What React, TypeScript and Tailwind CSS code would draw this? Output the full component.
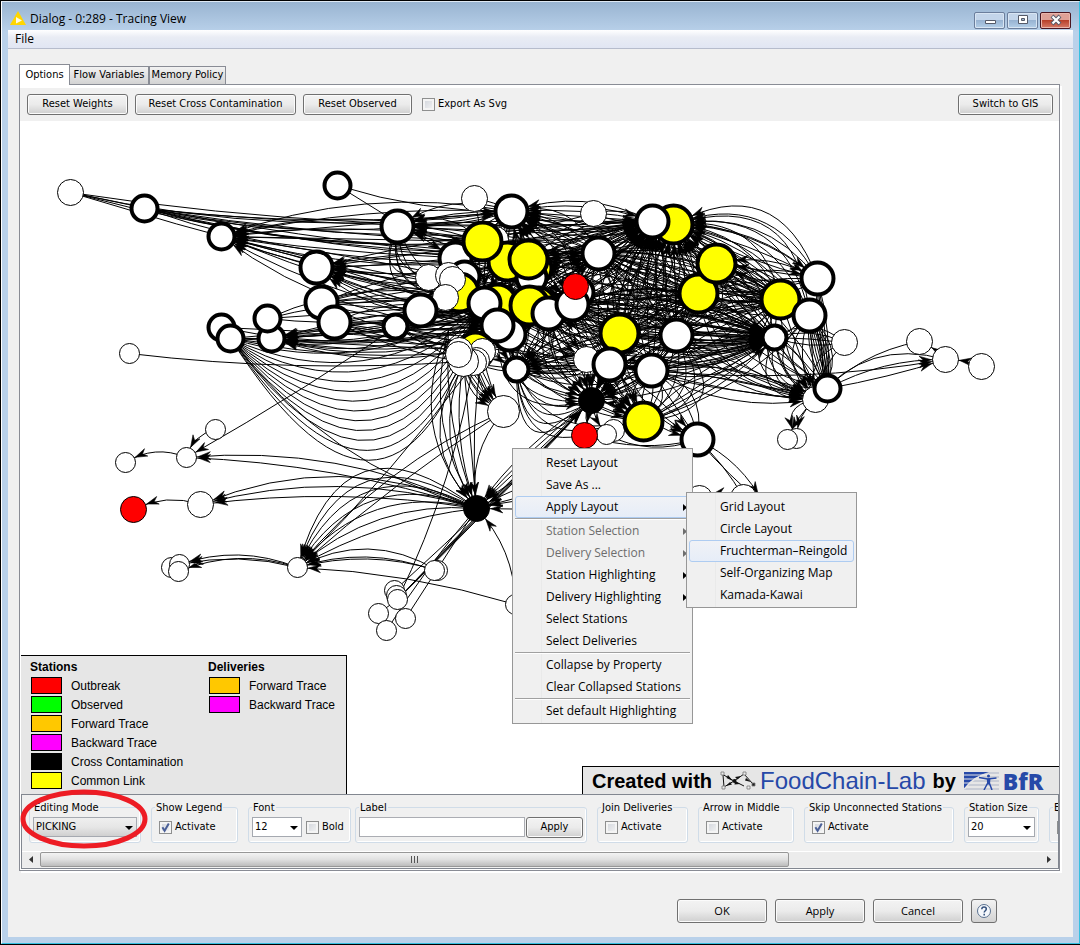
import { useId, type ReactNode } from "react";

/* ---------- graph data ---------- */

type Node = [x: number, y: number, r: number, kind: string];

// kinds: t = thin white, w = thick white, y = thick yellow, r = red, k = black
const nodes: Node[] = [
  [70, 192, 13, "t"], [144, 208, 13, "w"], [221, 236, 13, "w"], [337, 185, 13, "w"],
  [321, 302, 16, "w"], [316, 267, 16, "w"], [334, 322, 16, "w"], [271, 338, 13, "w"],
  [267, 318, 13, "w"], [221, 327, 13, "w"], [230, 338, 13, "w"], [129, 353, 10, "t"],
  [397, 226, 16, "w"], [474, 198, 13, "t"], [495, 239, 13, "t"], [511, 211, 16, "w"],
  [593, 213, 13, "t"], [455, 258, 16, "w"], [428, 277, 13, "t"], [464, 276, 15, "w"],
  [535, 268, 16, "y"], [507, 261, 19, "y"], [482, 241, 19, "y"], [531, 277, 15, "w"],
  [528, 259, 19, "y"], [459, 292, 19, "y"], [448, 275, 13, "t"], [452, 279, 13, "t"],
  [445, 297, 13, "t"], [497, 303, 19, "y"], [484, 303, 16, "w"], [538, 304, 17, "y"],
  [529, 305, 19, "y"], [548, 313, 16, "w"], [578, 292, 15, "w"], [572, 304, 16, "w"],
  [575, 286, 13, "r"], [598, 253, 16, "w"], [420, 310, 16, "w"], [395, 326, 12, "w"],
  [509, 334, 16, "w"], [497, 325, 16, "w"], [475, 350, 18, "y"], [482, 351, 13, "t"],
  [476, 360, 13, "t"], [473, 362, 13, "t"], [463, 361, 15, "t"], [459, 350, 13, "t"],
  [458, 354, 13, "t"], [516, 369, 12, "w"], [503, 411, 16, "t"], [619, 333, 19, "y"],
  [586, 359, 13, "t"], [609, 364, 16, "w"], [591, 400, 13, "k"], [676, 335, 16, "w"],
  [651, 370, 16, "w"], [613, 430, 11, "t"], [606, 434, 10, "t"], [584, 435, 13, "r"],
  [643, 421, 19, "y"], [697, 439, 16, "w"], [673, 224, 19, "y"], [652, 221, 16, "w"],
  [698, 293, 19, "y"], [716, 263, 19, "y"], [817, 278, 16, "w"], [780, 299, 19, "y"],
  [809, 315, 16, "w"], [774, 337, 12, "w"], [844, 342, 13, "t"], [815, 399, 13, "t"],
  [827, 388, 13, "w"], [796, 438, 10, "t"], [787, 439, 10, "t"], [919, 341, 13, "t"],
  [945, 359, 13, "t"], [981, 366, 13, "t"], [215, 429, 10, "t"], [186, 457, 10, "t"],
  [125, 462, 10, "t"], [200, 504, 13, "t"], [133, 509, 13, "r"], [476, 508, 13, "k"],
  [171, 567, 10, "t"], [179, 564, 10, "t"], [178, 571, 10, "t"], [297, 567, 10, "t"],
  [437, 570, 10, "t"], [434, 570, 10, "t"], [394, 590, 10, "t"], [396, 595, 10, "t"],
  [397, 599, 10, "t"], [378, 613, 10, "t"], [405, 618, 10, "t"], [386, 630, 10, "t"],
  [515, 604, 10, "t"], [699, 498, 13, "t"], [743, 497, 13, "t"], [764, 505, 12, "t"],
];

const radiusAt = (x: number, y: number) =>
  nodes.find((n) => n[0] === x && n[1] === y)?.[2] ?? 12;

type Point = [number, number];
// from, to, first control offset, number of parallel deliveries, gap between them, no arrow heads
type Bundle = [from: Point, to: Point, offset: number, count: number, gap?: number, plain?: boolean];

const bundles: Bundle[] = [
  [[70, 192], [652, 221], 30, 1], [[70, 192], [511, 211], 40, 1], [[70, 192], [528, 259], 16, 1],
  [[70, 192], [598, 253], 40, 1], [[70, 192], [497, 303], 10, 1],
  [[144, 208], [511, 211], 20, 2], [[144, 208], [652, 221], 20, 3], [[144, 208], [482, 241], 10, 2],
  [[144, 208], [528, 259], 20, 2],
  [[337, 185], [511, 211], 14, 1], [[337, 185], [455, 258], 0, 1],
  [[511, 211], [221, 236], 0, 3], [[482, 241], [221, 236], 0, 3], [[528, 259], [221, 236], -50, 4],
  [[497, 325], [221, 236], -50, 4], [[572, 304], [221, 236], -30, 3],
  [[652, 221], [316, 267], -20, 3], [[528, 259], [316, 267], -40, 4], [[548, 313], [316, 267], -50, 4],
  [[484, 303], [316, 267], -50, 4],
  [[511, 211], [397, 226], -10, 3], [[673, 224], [397, 226], -50, 4], [[598, 253], [397, 226], -30, 4],
  [[482, 241], [397, 226], 30, 1],
  [[397, 226], [459, 292], 20, 3], [[397, 226], [428, 277], 30, 2, 20, true], [[397, 226], [445, 297], 44, 2, 20, true],
  [[321, 302], [497, 303], -30, 5], [[334, 322], [497, 325], -40, 5], [[334, 322], [609, 364], -20, 4],
  [[321, 302], [598, 253], -30, 4], [[267, 318], [484, 303], -40, 4],
  [[484, 303], [271, 338], -50, 4], [[497, 325], [271, 338], -40, 4], [[572, 304], [271, 338], -70, 5],
  [[230, 338], [484, 303], 20, 14, 20, true], [[230, 338], [475, 350], -20, 3], [[221, 327], [497, 325], 10, 2],
  [[230, 338], [476, 508], 50, 1, 20, true], [[129, 353], [463, 361], 16, 1, 20, true],
  [[511, 211], [474, 198], 4, 1, 20, true], [[474, 198], [482, 241], 0, 1, 20, true],
  [[420, 310], [652, 221], -20, 5], [[395, 326], [598, 253], 0, 4], [[395, 326], [509, 334], -30, 4],
  [[420, 310], [529, 305], -30, 4], [[395, 326], [609, 364], 10, 3, 20, true],

  [[484, 303], [652, 221], -40, 7], [[529, 305], [652, 221], -60, 8], [[572, 304], [652, 221], -50, 7],
  [[609, 364], [652, 221], -60, 7], [[619, 333], [673, 224], -60, 7], [[676, 335], [673, 224], -60, 6],
  [[528, 259], [652, 221], -30, 6], [[511, 211], [652, 221], -20, 4], [[598, 253], [652, 221], -20, 3],
  [[593, 213], [652, 221], -12, 2, 20, true], [[698, 293], [652, 221], -40, 5], [[716, 263], [673, 224], -10, 2],
  [[817, 278], [673, 224], 28, 4], [[809, 315], [673, 224], -40, 8], [[780, 299], [673, 224], -40, 6],
  [[774, 337], [673, 224], -50, 6, 20, true], [[482, 241], [593, 213], 0, 2, 20, true], [[652, 221], [511, 211], -30, 4],
  [[572, 304], [511, 211], -30, 5], [[598, 253], [511, 211], -40, 5], [[698, 293], [511, 211], -60, 6],
  [[780, 299], [528, 259], -70, 8], [[780, 299], [598, 253], -60, 7, 20, true], [[809, 315], [598, 253], -40, 6, 20, true],
  [[774, 337], [548, 313], -50, 7], [[817, 278], [698, 293], -30, 4, 20, true], [[817, 278], [716, 263], -20, 3],
  [[484, 303], [774, 337], -70, 9], [[529, 305], [774, 337], -50, 8], [[598, 253], [774, 337], -60, 8, 20, true],
  [[572, 304], [774, 337], -60, 8, 20, true], [[619, 333], [774, 337], -40, 6], [[676, 335], [774, 337], -30, 4],
  [[651, 370], [774, 337], -20, 4, 20, true], [[643, 421], [774, 337], -20, 3], [[652, 221], [809, 315], -40, 5, 20, true],
  [[716, 263], [809, 315], -30, 4, 20, true], [[698, 293], [780, 299], -30, 4, 20, true], [[673, 224], [817, 278], -30, 3],

  [[484, 303], [509, 334], -30, 4], [[528, 259], [484, 303], -40, 5], [[482, 241], [529, 305], -50, 6],
  [[455, 258], [548, 313], -40, 6], [[511, 211], [497, 325], -60, 7], [[598, 253], [497, 325], -60, 7],
  [[459, 292], [548, 313], -60, 7], [[464, 276], [572, 304], -40, 5], [[507, 261], [572, 304], -30, 4],
  [[511, 211], [459, 292], -20, 4], [[619, 333], [529, 305], -50, 6], [[676, 335], [572, 304], -50, 6, 20, true],
  [[698, 293], [572, 304], -60, 7, 20, true], [[698, 293], [516, 369], -60, 7], [[619, 333], [516, 369], -50, 6, 20, true],
  [[548, 313], [516, 369], -40, 5, 20, true], [[651, 370], [516, 369], -50, 5, 20, true], [[529, 305], [516, 369], -30, 4, 20, true],
  [[484, 303], [516, 369], -10, 3], [[598, 253], [619, 333], -50, 5, 20, true], [[529, 305], [586, 359], -10, 3],
  [[484, 303], [609, 364], -60, 7, 20, true], [[572, 304], [609, 364], -40, 5, 20, true], [[698, 293], [619, 333], -40, 5, 20, true],
  [[598, 253], [676, 335], -50, 5, 20, true], [[716, 263], [676, 335], -50, 5, 20, true], [[780, 299], [676, 335], -40, 5, 20, true],
  [[676, 335], [609, 364], -30, 4], [[780, 299], [651, 370], -30, 5, 20, true], [[652, 221], [651, 370], -70, 7, 20, true],

  [[548, 313], [591, 400], -30, 5], [[497, 325], [591, 400], -20, 6], [[609, 364], [591, 400], -20, 3],
  [[676, 335], [591, 400], -30, 4], [[651, 370], [591, 400], -30, 4], [[619, 333], [591, 400], -40, 5],
  [[516, 369], [591, 400], 40, 4, 20, true], [[698, 293], [591, 400], -40, 5, 20, true], [[774, 337], [591, 400], -30, 3, 20, true],
  [[548, 313], [643, 421], 0, 4], [[609, 364], [643, 421], -10, 3], [[572, 304], [643, 421], -10, 3],
  [[676, 335], [643, 421], -90, 5, 20, true], [[651, 370], [643, 421], -30, 4, 20, true], [[484, 303], [643, 421], 20, 3, 20, true],
  [[609, 364], [697, 439], -10, 2], [[651, 370], [697, 439], -40, 3, 20, true], [[619, 333], [697, 439], 40, 2],
  [[591, 400], [584, 435], 0, 1], [[591, 400], [606, 434], 6, 2],
  [[584, 435], [697, 439], 16, 1, 20, true], [[606, 434], [697, 439], 20, 1, 20, true],

  [[484, 303], [503, 411], 20, 3, 20, true], [[463, 361], [503, 411], 0, 4, 8], [[476, 360], [503, 411], 0, 3, 8],
  [[516, 369], [609, 425], 40, 3, 20, true],
  [[809, 315], [815, 399], -40, 6, 20, true], [[809, 315], [827, 388], -20, 8, 5, true], [[774, 337], [815, 399], -20, 5],
  [[780, 299], [815, 399], 0, 5], [[844, 342], [815, 399], 10, 2, 20, true], [[844, 342], [774, 337], -10, 4, 12, true],
  [[676, 335], [815, 399], 0, 4, 12], [[651, 370], [815, 399], -30, 4], [[609, 364], [815, 399], -30, 3],
  [[698, 293], [827, 388], 0, 5, 20, true], [[716, 263], [827, 388], -20, 4, 20, true], [[817, 278], [827, 388], -10, 5, 5, true],
  [[643, 421], [809, 315], 10, 2, 20, true],
  [[815, 399], [787, 439], 6, 1], [[815, 399], [796, 438], 10, 2],
  [[827, 388], [945, 359], -16, 2], [[919, 341], [815, 399], 20, 1, 20, true], [[945, 359], [815, 399], 44, 1, 20, true],
  [[651, 370], [945, 359], 20, 1], [[945, 359], [919, 341], 4, 1], [[981, 366], [945, 359], 4, 1],

  [[476, 508], [186, 457], 20, 2], [[476, 508], [200, 504], 20, 3], [[476, 508], [297, 567], 20, 7],
  [[503, 411], [297, 567], 10, 2], [[476, 360], [297, 567], -10, 1],
  [[420, 310], [186, 457], -6, 1], [[215, 429], [186, 457], 12, 1], [[186, 457], [125, 462], 16, 1],
  [[200, 504], [133, 509], 14, 1], [[297, 567], [179, 564], 14, 2, 8], [[297, 567], [178, 571], 22, 1],
  [[437, 570], [297, 567], 20, 2], [[434, 570], [297, 567], 24, 1], [[515, 604], [297, 567], 14, 1],
  [[448, 330], [476, 508], 20, 3], [[463, 361], [476, 508], 0, 4], [[482, 351], [476, 508], 10, 1],
  [[503, 411], [476, 508], 24, 1, 20, true],
  [[475, 350], [397, 599], -20, 1, 20, true],
  [[397, 599], [591, 400], -3, 4, 2], [[394, 590], [591, 400], 4, 1],
  [[405, 618], [476, 508], 0, 1, 20, true], [[386, 630], [476, 508], -6, 1, 20, true],
  [[591, 400], [476, 508], 0, 3, 8], [[620, 470], [476, 508], 0, 3], [[620, 510], [476, 508], 0, 2],
  [[515, 604], [476, 508], 20, 1], [[397, 599], [378, 613], 0, 1, 20, true],
  [[697, 439], [743, 497], -6, 1, 20, true], [[697, 439], [764, 505], -16, 2], [[743, 497], [699, 498], 10, 1],
];

const round = (n: number) => Math.round(n * 10) / 10;

function buildEdges() {
  let lines = "";
  let heads = "";
  for (const [[x1, y1], [x2, y2], first, count, gap = 20, plain = false] of bundles) {
    const dx = x2 - x1;
    const dy = y2 - y1;
    const len = Math.hypot(dx, dy);
    for (let i = 0; i < count; i++) {
      const off = first + i * gap;
      const cx = (x1 + x2) / 2 - (dy / len) * off;
      const cy = (y1 + y2) / 2 + (dx / len) * off;
      lines += `M${x1} ${y1}Q${round(cx)} ${round(cy)} ${x2} ${y2}`;
      if (plain) continue;
      const r = radiusAt(x2, y2) + 1;
      let t = 1;
      let px = x2;
      let py = y2;
      while (t > 0.3 && Math.hypot(px - x2, py - y2) < r) {
        t -= 0.005;
        const u = 1 - t;
        px = u * u * x1 + 2 * u * t * cx + t * t * x2;
        py = u * u * y1 + 2 * u * t * cy + t * t * y2;
      }
      const tx = (1 - t) * (cx - x1) + t * (x2 - cx);
      const ty = (1 - t) * (cy - y1) + t * (y2 - cy);
      const tl = Math.hypot(tx, ty);
      const ux = tx / tl;
      const uy = ty / tl;
      const at = (back: number, side: number) =>
        `${round(px - ux * back - uy * side)} ${round(py - uy * back + ux * side)}`;
      heads += `M${at(0, 0)}L${at(12, 4)}L${at(8, 0)}L${at(12, -4)}Z`;
    }
  }
  return { lines, heads };
}

const edges = buildEdges();

const fills: Record<string, string> = { t: "#fff", w: "#fff", y: "#ff0", r: "#f00", k: "#000" };

function Graph() {
  return (
    <svg width="1038" height="673" viewBox="20.5 120.5 1038 673" className="block" role="img" aria-label="Delivery graph">
      <path d={edges.lines} fill="none" stroke="#000" strokeWidth="1" />
      <path d={edges.heads} fill="#000" stroke="#000" strokeWidth="0.6" />
      {nodes.map(([x, y, r, kind], i) => (
        <circle key={i} cx={x} cy={y} r={r} fill={fills[kind]} stroke="#000" strokeWidth={kind === "w" || kind === "y" ? 4 : 1} />
      ))}
    </svg>
  );
}

/* ---------- controls ---------- */

function Button({ children, className = "" }: { children: ReactNode; className?: string }) {
  return (
    <button
      type="button"
      className={`flex shrink-0 items-center justify-center whitespace-nowrap rounded-[3px] border border-[#707070] bg-linear-to-b from-[#f3f3f3] from-0% via-[#ebebeb] via-50% to-[#cfcfcf] shadow-[inset_0_0_0_1px_#fbfbfb] ${className}`}
    >
      {children}
    </button>
  );
}

function Check({ label, checked = false }: { label: string; checked?: boolean }) {
  return (
    <label className="flex items-center gap-[3px] whitespace-nowrap">
      <span className="grid size-[13px] shrink-0">
        <input
          type="checkbox"
          defaultChecked={checked}
          className="peer col-start-1 row-start-1 size-[13px] appearance-none border border-[#8e8f8f] bg-linear-to-br from-[#cfd3da] to-[#f6f6f6] shadow-[inset_0_0_0_2px_#f4f4f4]"
        />
        <svg viewBox="0 0 13 13" className="pointer-events-none invisible col-start-1 row-start-1 size-[13px] peer-checked:visible">
          <path d="M3.4 6.2 5.6 9.8 9.8 2.6" fill="none" stroke="#4a5f97" strokeWidth="2" />
        </svg>
      </span>
      {label}
    </label>
  );
}

function Combo({ label, value, options, className }: { label: string; value: string; options: string[]; className: string }) {
  return (
    <span className={`grid h-5 ${className}`}>
      <select
        aria-label={label}
        defaultValue={value}
        className="col-start-1 row-start-1 h-5 w-full appearance-none border border-[#a5a9b0] bg-transparent pl-0.5 pr-4"
      >
        {options.map((o) => (
          <option key={o}>{o}</option>
        ))}
      </select>
      <svg viewBox="0 0 8 4" className="pointer-events-none col-start-1 row-start-1 mr-1 mt-0.5 h-1 w-2 self-center justify-self-end">
        <path d="M0 0h8L4 4z" />
      </svg>
    </span>
  );
}

function Group({ title, className, indent = false, children }: { title: string; className: string; indent?: boolean; children: ReactNode }) {
  return (
    <fieldset className={`h-[42px] min-w-0 shrink-0 rounded-[3px] border border-[#d0dce8] px-[3px] shadow-[inset_-1px_-1px_0_#fff] ${className}`}>
      <legend className="whitespace-nowrap px-px leading-[13px]">{title}</legend>
      <div className={`mt-[3px] flex h-5 items-center ${indent ? "pl-1" : ""}`}>{children}</div>
    </fieldset>
  );
}

function ControlBar() {
  const id = useId();
  return (
    <div className="relative">
      <div className="flex h-[52px] overflow-hidden pl-[7px] pt-1.5">
        <Group title="Editing Mode" className="mr-2.5 w-[112px]">
          <Combo label="Editing Mode" value="PICKING" options={["PICKING", "TRANSFORMING"]} className="w-[105px] bg-linear-to-b from-[#f0f0f0] via-[#e6e6e6] to-[#cdcdcd]" />
        </Group>
        <Group title="Show Legend" indent className="mr-2.5 w-[87px]">
          <Check label="Activate" checked />
        </Group>
        <Group title="Font" className="mr-1 w-[103px]">
          <Combo label="Font" value="12" options={["10", "12", "14", "18"]} className="mr-1 w-[50px] bg-white" />
          <Check label="Bold" />
        </Group>
        <Group title="Label" className="mr-2.5 w-[232px]">
          <input id={id} aria-label="Label" className="h-5 w-[166px] shrink-0 border border-[#abadb3] bg-white px-1" />
          <Button className="ml-px h-[21px] w-[57px]">Apply</Button>
        </Group>
        <Group title="Join Deliveries" indent className="mr-2.5 w-[91px]">
          <Check label="Activate" />
        </Group>
        <Group title="Arrow in Middle" indent className="mr-2.5 w-[96px]">
          <Check label="Activate" />
        </Group>
        <Group title="Skip Unconnected Stations" indent className="mr-2.5 w-[150px]">
          <Check label="Activate" checked />
        </Group>
        <Group title="Station Size" className="mr-2.5 w-[75px]">
          <Combo label="Station Size" value="20" options={["10", "20", "30"]} className="w-[68px] bg-white" />
        </Group>
        <Group title="Edge Label" indent className="w-[90px]">
          <Check label="" />
        </Group>
      </div>
      <svg viewBox="0 0 128 60" className="pointer-events-none absolute -left-0.5 -top-[6px] h-[60px] w-[128px]">
        <ellipse cx="64" cy="30" rx="61" ry="27" fill="none" stroke="#ed1c24" strokeWidth="5" />
      </svg>
    </div>
  );
}

function ScrollBar() {
  return (
    <div className="mb-px mt-1 flex h-4 items-center border-t border-white bg-[#ececec]">
      <button type="button" aria-label="Scroll left" className="flex h-4 w-[18px] items-center justify-center">
        <svg viewBox="0 0 4 7" className="h-[7px] w-1"><path d="M4 0v7L0 3.5z" fill="#333" /></svg>
      </button>
      <div className="flex h-[15px] w-[749px] items-center justify-center gap-0.5 rounded-[2px] border border-[#979797] bg-linear-to-b from-[#f3f3f3] via-[#e0e0e0] to-[#bcbcbc]">
        <span className="h-[7px] w-px bg-[#555]" />
        <span className="h-[7px] w-px bg-[#555]" />
        <span className="h-[7px] w-px bg-[#555]" />
      </div>
      <button type="button" aria-label="Scroll right" className="ml-auto flex h-4 w-[18px] items-center justify-center">
        <svg viewBox="0 0 4 7" className="h-[7px] w-1"><path d="M0 0v7l4-3.5z" fill="#333" /></svg>
      </button>
    </div>
  );
}

/* ---------- overlays on the graph ---------- */

function Swatch({ color, label }: { color: string; label: string }) {
  return (
    <li className="flex h-[19px] items-center gap-[9px]">
      <span className={`h-[17px] w-[31px] border border-black ${color}`} />
      {label}
    </li>
  );
}

function Legend() {
  return (
    <div className="absolute bottom-0 left-0 flex h-[139px] w-[326px] border-r border-t border-black bg-[#e6e6e6] pl-[9px] pt-[3px] font-['Liberation_Sans',Arial,sans-serif] text-[12px] leading-4">
      <div className="w-[178px]">
        <h2 className="pb-px font-bold">Stations</h2>
        <ul className="pl-px">
          <Swatch color="bg-[#ff0000]" label="Outbreak" />
          <Swatch color="bg-[#00ff00]" label="Observed" />
          <Swatch color="bg-[#ffc800]" label="Forward Trace" />
          <Swatch color="bg-[#ff00ff]" label="Backward Trace" />
          <Swatch color="bg-black" label="Cross Contamination" />
          <Swatch color="bg-[#ffff00]" label="Common Link" />
        </ul>
      </div>
      <div>
        <h2 className="pb-px font-bold">Deliveries</h2>
        <ul className="pl-px">
          <Swatch color="bg-[#ffc800]" label="Forward Trace" />
          <Swatch color="bg-[#ff00ff]" label="Backward Trace" />
        </ul>
      </div>
    </div>
  );
}

function Credit() {
  return (
    <div className="absolute bottom-0 right-0 flex h-7 w-[477px] items-center whitespace-nowrap border-l border-t border-black bg-[#e6e6e6] pl-[9px] font-['Liberation_Sans',Arial,sans-serif] text-[20px] font-bold leading-6">
      Created with
      <svg viewBox="0 0 36 20" className="ml-2 h-5 w-9 shrink-0">
        <g fill="none" stroke="#111" strokeWidth="1">
          <path d="M2 3 14 10M14 10 4 16M14 10 24 3M14 10 24 15M3 4l1 12M24 3l9 10" />
        </g>
        <g fill="#111">
          <path d="M13 10 8 4 6.500 7zM6 15l6-1.500L10 11zM21 5l-6 1 2.500 2.500zM20 13l-5-3-.5 3.500zM31 11l-5-4-1 2.500z" />
          <circle cx="14.500" cy="10" r="2" />
        </g>
        <g fill="#eee" stroke="#777" strokeWidth="0.800">
          <path d="M1 1h3v3H1zM2 15h3v3H2zM23 1h3v3h-3zM27 15h3v3h-3z" />
          <path d="M32 12h3v3h-3z" fill="#222" />
        </g>
      </svg>
      <span className="ml-1 text-[24px] font-normal text-[#2649a8]">FoodChain-Lab</span>
      <span className="ml-[7px]">by</span>
      <svg viewBox="0 0 35 18" className="ml-2 h-[18px] w-[35px] shrink-0">
        <path d="M0 0h35v2H0zM0 4h35v2H0zM0 8h35v2H0zM0 12h35v2H0zM0 16h35v2H0z" fill="#c9cdd6" />
        <path d="M0 0h25C14 3 6 9 0 18z" fill="#2649a8" />
        <path d="M0 3h20M0 7h12M0 11h7" stroke="#e6e6e6" strokeWidth="1" />
        <path d="M0 17.500C7 8 15 3 25 2" fill="none" stroke="#e6e6e6" strokeWidth="1.500" />
        <g fill="none" stroke="#2649a8" strokeWidth="1.500">
          <path d="M15 5.500l8.500 1.500 9-1M24.500 7v5M23.700 11 20 18M25.300 11l2.700 7" />
        </g>
        <path d="M22.800 6.500h3.600l-.4 6h-2.800z" fill="#2649a8" />
        <circle cx="24.500" cy="4" r="1.500" fill="#2649a8" />
      </svg>
      <span className="ml-1 font-['Open_Sans','Noto_Sans',sans-serif] text-[23px] font-extrabold text-[#2649a8]">BfR</span>
    </div>
  );
}

function Item({ label, sub = false, disabled = false, active = false }: { label: string; sub?: boolean; disabled?: boolean; active?: boolean }) {
  return (
    <button
      type="button"
      role="menuitem"
      disabled={disabled}
      className={`flex h-[22px] w-full items-center justify-between whitespace-nowrap rounded-[3px] border pl-[30px] ${
        active ? "border-[#aeccf1] bg-linear-to-b from-[#f0f2f6] to-[#e6edf8]" : "border-transparent"
      } ${disabled ? "text-[#6d6d6d]" : ""}`}
    >
      {label}
      {sub && <svg viewBox="0 0 4 7" className="mr-0.5 h-[7px] w-1"><path d="M0 0v7l4-3.500z" fill="currentColor" /></svg>}
    </button>
  );
}

const Separator = () => <hr className="h-0.5 border-b border-t border-b-white border-t-[#a0a0a0]" />;

const menuBox =
  "absolute border border-[#979797] bg-[#f0f0f0] bg-linear-to-r from-transparent from-[28px] via-[#e2e3e3] via-[28px] to-transparent to-[29px] px-0.5 pt-[3px] font-['Open_Sans','Noto_Sans',sans-serif] text-[12px]";

function ContextMenu() {
  return (
    <>
      <div role="menu" className={`${menuBox} left-[491px] top-[327px] w-[181px] pb-px`}>
        <Item label="Reset Layout" />
        <Item label="Save As ..." />
        <Item label="Apply Layout" sub active />
        <Separator />
        <Item label="Station Selection" sub disabled />
        <Item label="Delivery Selection" sub disabled />
        <Item label="Station Highlighting" sub />
        <Item label="Delivery Highlighting" sub />
        <Item label="Select Stations" />
        <Item label="Select Deliveries" />
        <Separator />
        <Item label="Collapse by Property" />
        <Item label="Clear Collapsed Stations" />
        <Separator />
        <Item label="Set default Highlighting" />
      </div>
      <div role="menu" className={`${menuBox} left-[665px] top-[371px] w-[171px] pb-px`}>
        <Item label="Grid Layout" />
        <Item label="Circle Layout" />
        <Item label="Fruchterman–Reingold" active />
        <Item label="Self-Organizing Map" />
        <Item label="Kamada-Kawai" />
      </div>
    </>
  );
}

/* ---------- window ---------- */

const captionButton =
  "flex h-[17px] w-[31px] items-center justify-center rounded-[2px] border border-[#6b7e9c] bg-linear-to-b from-[#c3d5ea] from-45% via-[#98b3d2] via-50% to-[#b4cfe8] shadow-[inset_0_0_0_1px_#d8e5f3]";

function TitleBar() {
  return (
    <header className="flex h-7 items-center pl-0.5 pr-0.5 font-['Open_Sans','Noto_Sans',sans-serif] text-[12px]">
      <svg viewBox="0 0 16 14" className="mt-1 h-3.5 w-4 shrink-0">
        <path d="M8 0l8 14H0z" fill="#ffd600" />
        <path d="M6 6l6 3.500L6 12.500z" fill="#fffbe0" />
      </svg>
      <h1 className="ml-1 mt-1.5 flex-1">Dialog - 0:289 - Tracing View</h1>
      <div className="mt-2 flex gap-0.5">
        <button type="button" aria-label="Minimize" className={captionButton}>
          <svg viewBox="0 0 12 12" className="size-3"><path d="M1.500 6.500h10v3h-10z" fill="#fff" stroke="#555a68" /></svg>
        </button>
        <button type="button" aria-label="Maximize" className={captionButton}>
          <svg viewBox="0 0 12 12" className="size-3"><path d="M1.500 1.500h9v8h-9z" fill="#fff" stroke="#555a68" /><path d="M4.500 4.500h3v2h-3z" fill="#9db5d1" stroke="#555a68" /></svg>
        </button>
        <button
          type="button"
          aria-label="Close"
          className="flex h-[17px] w-[31px] items-center justify-center rounded-[2px] border border-[#4a1520] bg-linear-to-b from-[#dea096] from-45% via-[#b8402a] via-50% to-[#d67a68] shadow-[inset_0_0_0_1px_#e9b5ab]"
        >
          <svg viewBox="0 0 12 12" className="size-3">
            <path d="M2 2l8 8M10 2l-8 8" stroke="#555a68" strokeWidth="4" />
            <path d="M2.500 2.500l7 7M9.500 2.500l-7 7" stroke="#fff" strokeWidth="2.200" />
          </svg>
        </button>
      </div>
    </header>
  );
}

export default function App() {
  return (
    <div className="flex min-h-screen flex-col border-b border-l border-t border-black font-['DejaVu_Sans_Condensed','DejaVu_Sans',sans-serif] text-[11px] text-black">
      <div className="flex flex-1 flex-col border-b border-l border-r border-t border-b-[#35c0e0] border-l-white border-r-[#35c0e0] border-t-[#dfe9f4] bg-linear-to-b from-[#99b4d1] to-[#b9d1ea] to-[30px] px-1.5 pb-1.5">
        <TitleBar />
        <nav className="flex h-[19px] items-center border-b border-[#b6bccc] bg-linear-to-b from-white from-0% via-[#e9ecf4] via-40% to-[#e1e6f3] pl-[7px] font-['Open_Sans','Noto_Sans',sans-serif] text-[12px]">
          <button type="button">File</button>
        </nav>
        <main className="flex flex-1 flex-col bg-[#f0f0f0] pb-[14px] pl-[11px] pr-[13px] pt-[15px]">
          <div role="tablist" className="flex items-end">
            <button type="button" role="tab" aria-selected="true" className="z-10 -mb-px h-[21px] w-[51px] border border-b-0 border-[#898c95] bg-white">
              Options
            </button>
            <button type="button" role="tab" aria-selected="false" className="h-[18px] w-[79px] border border-b-0 border-l-0 border-[#898c95] bg-linear-to-b from-[#f2f2f2] to-[#d3d3d3]">
              Flow Variables
            </button>
            <button type="button" role="tab" aria-selected="false" className="h-[18px] w-[77px] border border-b-0 border-[#898c95] bg-linear-to-b from-[#f2f2f2] to-[#d3d3d3]">
              Memory Policy
            </button>
          </div>
          <section className="flex flex-1 flex-col border border-[#898c95] bg-white pt-[3px] shadow-[2px_2px_0_#fff]">
            <div className="flex h-[33px] shrink-0 items-center bg-[#f0f0f0] pl-[7px] pr-1.5">
              <Button className="mr-[7px] h-[21px] w-[101px]">Reset Weights</Button>
              <Button className="mr-[7px] h-[21px] w-[161px]">Reset Cross Contamination</Button>
              <Button className="mr-2.5 h-[21px] w-[109px]">Reset Observed</Button>
              <Check label="Export As Svg" />
              <Button className="ml-auto h-[21px] w-[95px]">Switch to GIS</Button>
            </div>
            <div className="relative ml-px min-h-[673px] flex-1">
              <Graph />
              <Legend />
              <Credit />
              <ContextMenu />
            </div>
            <div className="mb-px ml-px border border-[#828790] bg-[#f0f0f0]">
              <ControlBar />
              <ScrollBar />
            </div>
          </section>
          <div className="mt-7 flex justify-end gap-2 pr-[63px] font-['Open_Sans','Noto_Sans',sans-serif]">
            <Button className="h-6 w-[90px]">OK</Button>
            <Button className="h-6 w-[90px]">Apply</Button>
            <Button className="h-6 w-[90px]">Cancel</Button>
            <button type="button" aria-label="Help" className="flex h-6 w-[26px] items-center justify-center rounded-[3px] border border-[#707070] bg-linear-to-b from-[#f3f3f3] to-[#d2d2d2]">
              <svg viewBox="0 0 16 16" className="size-4">
                <circle cx="8" cy="8" r="6.500" fill="#f4f7fb" stroke="#5a7190" />
                <path d="M5.800 6.300c0-3 4.500-2.800 4.500-.2 0 1.700-2.100 1.700-2.100 3.500M8.200 10.800v1.600" fill="none" stroke="#33507c" strokeWidth="1.500" />
              </svg>
            </button>
          </div>
        </main>
      </div>
    </div>
  );
}
